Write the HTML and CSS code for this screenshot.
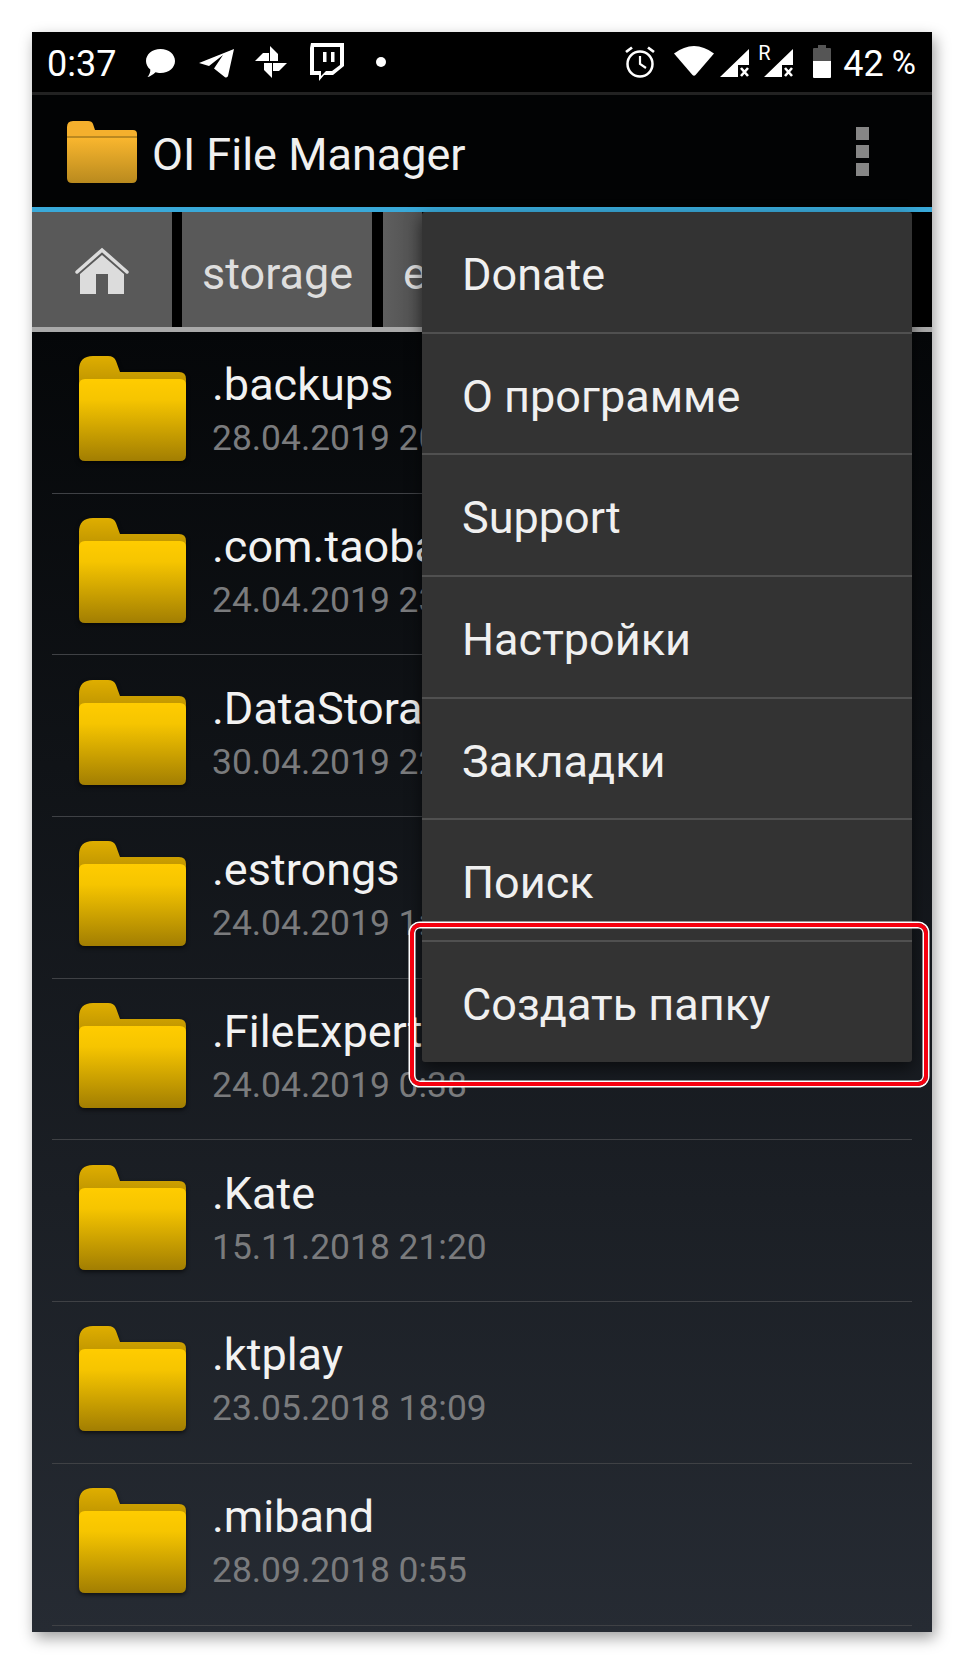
FILE: index.html
```html
<!DOCTYPE html>
<html lang="ru">
<head>
<meta charset="utf-8">
<title>OI File Manager</title>
<link rel="stylesheet" href="styles.css">
</head>
<body>
<svg class="defs" aria-hidden="true">
  <defs>
    <linearGradient id="fr" x1="0" y1="0" x2="0" y2="1"><stop offset="0" stop-color="#ffcc00"/><stop offset=".25" stop-color="#f6c500"/><stop offset="1" stop-color="#a27e02"/></linearGradient>
    <linearGradient id="bk" x1="0" y1="0" x2="0" y2="1"><stop offset="0" stop-color="#dfae00"/><stop offset="1" stop-color="#b18a00"/></linearGradient>
    <linearGradient id="ofr" x1="0" y1="0" x2="0" y2="1"><stop offset="0" stop-color="#f9b62e"/><stop offset="1" stop-color="#b98a1e"/></linearGradient>
    <symbol id="folder" viewBox="0 0 107 106">
      <path d="M0 14Q0 0 14 0H29Q35 0 37 5L41 16H100Q107 16 107 23V40H0Z" fill="url(#bk)"/>
      <path d="M0 29Q0 23 6 23H101Q107 23 107 29V99Q107 105 101 105H6Q0 105 0 99Z" fill="url(#fr)"/>
    </symbol>
    <symbol id="folder-o" viewBox="0 0 70 62">
      <path d="M0 6Q0 0 6 0H21Q25 0 26 3L28 9H66Q70 9 70 13V24H0Z" fill="#f5b02d"/>
      <path d="M0 17H70V57Q70 62 65 62H5Q0 62 0 57Z" fill="url(#ofr)"/>
      <path d="M0 16H70" stroke="#a87c1c" stroke-width="1.5"/>
    </symbol>
    <symbol id="signal" viewBox="0 0 29 28">
      <path d="M0 28L29 0V16H18V28Z" fill="#fff"/>
      <path d="M21 19L28 27M28 19L21 27" stroke="#fff" stroke-width="2.6"/>
    </symbol>
  </defs>
</svg>
<main class="screen">
  <header class="status">
    <div class="status-left">
      <span class="clock">0:37</span>
      <svg class="ic bubble" viewBox="0 0 29 28"><path d="M14.5 0C23 0 29 5.500 29 12C29 18.500 23 24 14.500 24C12.500 24 11 23.600 9.500 23.200C7 25.500 4 27.500 1.500 28C3.500 25.500 4.500 23 4.300 20.500C1.500 18.200 0 15.200 0 12C0 5.500 6 0 14.500 0Z" fill="#fff"/></svg>
      <svg class="ic plane" viewBox="0 0 35 29"><path d="M35 0L29 27Q28.500 29 26 28.300L15 19.500L24 6L10 17L0 14Z" fill="#fff"/></svg>
      <svg class="ic pin" viewBox="0 0 32 32"><path d="M15 0L23 8V15H15ZM32 17L24 25H18V17ZM17 32L9 24V17H17ZM0 15L8 7H14V15Z" fill="#fff"/></svg>
      <svg class="ic twitch" viewBox="0 0 35 38"><path fill-rule="evenodd" d="M2 0H35V23L24 32H15L10 38V32H1V5ZM5 4V28H12V33L17 28H23L31 22V4Z" fill="#fff"/><path d="M14 9H17.500V19H14ZM22 9H25.500V19H22Z" fill="#fff"/></svg>
      <span class="dot"></span>
    </div>
    <div class="status-right">
      <svg class="ic alarm" viewBox="0 0 30 32"><circle cx="15" cy="18" r="12.500" fill="none" stroke="#fff" stroke-width="2.500"/><path d="M15 10V18L21 22" fill="none" stroke="#fff" stroke-width="2.200"/><path d="M1 6L7 1.500M29 6L23 1.500" stroke="#fff" stroke-width="2.800"/></svg>
      <svg class="ic wifi" viewBox="0 0 40 30"><path d="M0 7.500Q20 -7.500 40 7.500L21.500 29Q20 30.500 18.500 29Z" fill="#fff"/></svg>
      <svg class="ic sig"><use href="#signal"/></svg>
      <span class="roam">R</span>
      <svg class="ic sig sig2"><use href="#signal"/></svg>
      <svg class="ic batt" viewBox="0 0 18 33"><path d="M5 0H13V3H17Q18 3 18 4V16H0V4Q0 3 1 3H5Z" fill="#555"/><path d="M0 16H18V32Q18 33 17 33H1Q0 33 0 32Z" fill="#fff"/></svg>
      <span class="pct">42</span>
      <span class="pct-sign">%</span>
    </div>
  </header>
  <div class="bar">
    <svg class="app-ic"><use href="#folder-o"/></svg>
    <h1 class="title">OI File Manager</h1>
    <div class="more"><i></i><i></i><i></i></div>
  </div>
  <nav class="crumbs">
    <div class="crumb home">
      <svg class="home-ic" viewBox="0 0 54 48"><path d="M2 25L27 3L52 25" fill="none" stroke="#dcdcdc" stroke-width="3.500" stroke-linecap="round"/><path fill-rule="evenodd" d="M5 27L27 8L49 27V47H5ZM21 27V47H33V27Z" fill="#dcdcdc"/></svg>
    </div>
    <div class="crumb storage">storage</div>
    <div class="crumb last">e</div>
  </nav>
  <section class="list">
    <div class="row"><svg class="fold"><use href="#folder"/></svg><div class="txt"><div class="name">.backups</div><div class="date">28.04.2019 20:14</div></div></div>
    <div class="row"><svg class="fold"><use href="#folder"/></svg><div class="txt"><div class="name">.com.taobao</div><div class="date">24.04.2019 23:10</div></div></div>
    <div class="row"><svg class="fold"><use href="#folder"/></svg><div class="txt"><div class="name">.DataStorage</div><div class="date">30.04.2019 22:31</div></div></div>
    <div class="row"><svg class="fold"><use href="#folder"/></svg><div class="txt"><div class="name">.estrongs</div><div class="date">24.04.2019 1:12</div></div></div>
    <div class="row"><svg class="fold"><use href="#folder"/></svg><div class="txt"><div class="name">.FileExpert</div><div class="date">24.04.2019 0:38</div></div></div>
    <div class="row"><svg class="fold"><use href="#folder"/></svg><div class="txt"><div class="name">.Kate</div><div class="date">15.11.2018 21:20</div></div></div>
    <div class="row"><svg class="fold"><use href="#folder"/></svg><div class="txt"><div class="name">.ktplay</div><div class="date">23.05.2018 18:09</div></div></div>
    <div class="row"><svg class="fold"><use href="#folder"/></svg><div class="txt"><div class="name">.miband</div><div class="date">28.09.2018 0:55</div></div></div>
  </section>
  <ul class="menu">
    <li>Donate</li>
    <li>О программе</li>
    <li>Support</li>
    <li>Настройки</li>
    <li>Закладки</li>
    <li>Поиск</li>
    <li>Создать папку</li>
  </ul>
  <div class="mark"></div>
</main>
</body>
</html>
```
FILE: styles.css
```css
* { box-sizing: border-box; }
html, body { margin: 0; background: #fff; }
body { padding: 32px; height: 1664px; overflow: hidden; font-family: Roboto, "Liberation Sans", sans-serif; }
.defs { display: block; width: 0; height: 0; }
.screen { position: relative; width: 900px; height: 1600px; overflow: visible; background: #000; box-shadow: 3px 6px 14px rgba(0,0,0,.38); display: flex; flex-direction: column; }

.status { height: 63px; flex: none; background: #000; border-bottom: 3px solid #222; display: flex; justify-content: space-between; align-items: flex-start; color: #fff; }
.status-left, .status-right { display: flex; align-items: flex-start; height: 60px; }
.status-left { padding-left: 15px; }
.status-right { padding-right: 16px; }
.ic { display: block; flex: none; }
.clock { font-size: 36px; line-height: 36px; margin-top: 14px; width: 68px; }
.bubble { width: 29px; height: 28px; margin: 17px 0 0 31px; }
.plane { width: 35px; height: 29px; margin: 17px 0 0 24px; }
.pin { width: 32px; height: 32px; margin: 14px 0 0 21px; }
.twitch { width: 35px; height: 38px; margin: 11px 0 0 22px; }
.dot { width: 10px; height: 10px; border-radius: 50%; background: #fff; margin: 25px 0 0 32px; }
.alarm { width: 30px; height: 32px; margin-top: 14px; }
.wifi { width: 40px; height: 30px; margin: 14px 0 0 19px; }
.sig { width: 29px; height: 28px; margin: 17px 0 0 6px; }
.roam { font-size: 20px; line-height: 20px; width: 12px; margin: 11px 0 0 9px; }
.sig2 { margin-left: -6px; }
.batt { width: 18px; height: 33px; margin: 13px 0 0 20px; }
.pct { font-size: 36px; line-height: 36px; margin: 14px 0 0 12px; }
.pct-sign { font-size: 33px; line-height: 36px; margin: 13px 0 0 8px; }

.bar { height: 117px; flex: none; background: #020304; border-bottom: 5px solid #39a9d9; display: flex; align-items: center; padding-left: 35px; color: #f0f0f0; position: relative; }
.app-ic { width: 70px; height: 62px; flex: none; margin-top: 2px; }
.title { font-size: 45px; font-weight: 400; margin: 6px 0 0 15px; flex: 1; }
.more { display: flex; flex-direction: column; gap: 5px; margin-right: 63px; margin-top: 1px; }
.more i { display: block; width: 13px; height: 13px; background: #868686; }

.crumbs { height: 120px; flex: none; display: flex; background: #000; border-bottom: 5px solid #a9a9a9; overflow: hidden; }
.crumb { background: #595959; color: #dedede; font-size: 45px; display: flex; align-items: center; flex: none; }
.home { width: 140px; justify-content: center; }
.home-ic { width: 54px; height: 48px; margin-top: 2px; }
.storage { width: 190px; margin-left: 10px; padding: 8px 0 0 20px; }
.last { width: 39px; margin-left: 11px; padding: 8px 0 0 20px; background: linear-gradient(90deg, #5f5f5f, #4f4f4f); }

.list { flex: 1; background: linear-gradient(180deg, #050709, #262b33); display: flex; flex-direction: column; padding: 0 20px; }
.row { height: 161.7px; flex: none; border-bottom: 1.5px solid #3f4145; display: flex; align-items: center; padding-left: 27px; }
.fold { width: 107px; height: 106px; flex: none; margin-top: -6px; filter: drop-shadow(0 2px 2px rgba(0,0,0,.6)); }
.txt { margin: -5px 0 0 26px; }
.name { font-size: 45px; line-height: 50px; margin-bottom: 7px; color: #f2f2f2; white-space: nowrap; }
.date { font-size: 35.4px; line-height: 42px; color: #7a7b7d; white-space: nowrap; }

.menu { position: absolute; top: 180px; right: 20px; width: 490px; margin: 0; padding: 0; list-style: none; background: #333; border-radius: 3px; box-shadow: 0 6px 16px rgba(0,0,0,.55); }
.menu li { height: 121.7px; padding: 5px 0 0 40px; display: flex; align-items: center; font-size: 45px; color: #f0f0f0; border-bottom: 2px solid #505050; }
.menu li:last-child { border-bottom: 0; height: 119.7px; }

.mark { position: absolute; left: 378px; top: 891px; width: 518px; height: 163px; border: 4px solid #f5000f; border-radius: 10px; box-shadow: 0 0 0 1.500px #fff, inset 0 0 0 1.500px #fff; }
```
